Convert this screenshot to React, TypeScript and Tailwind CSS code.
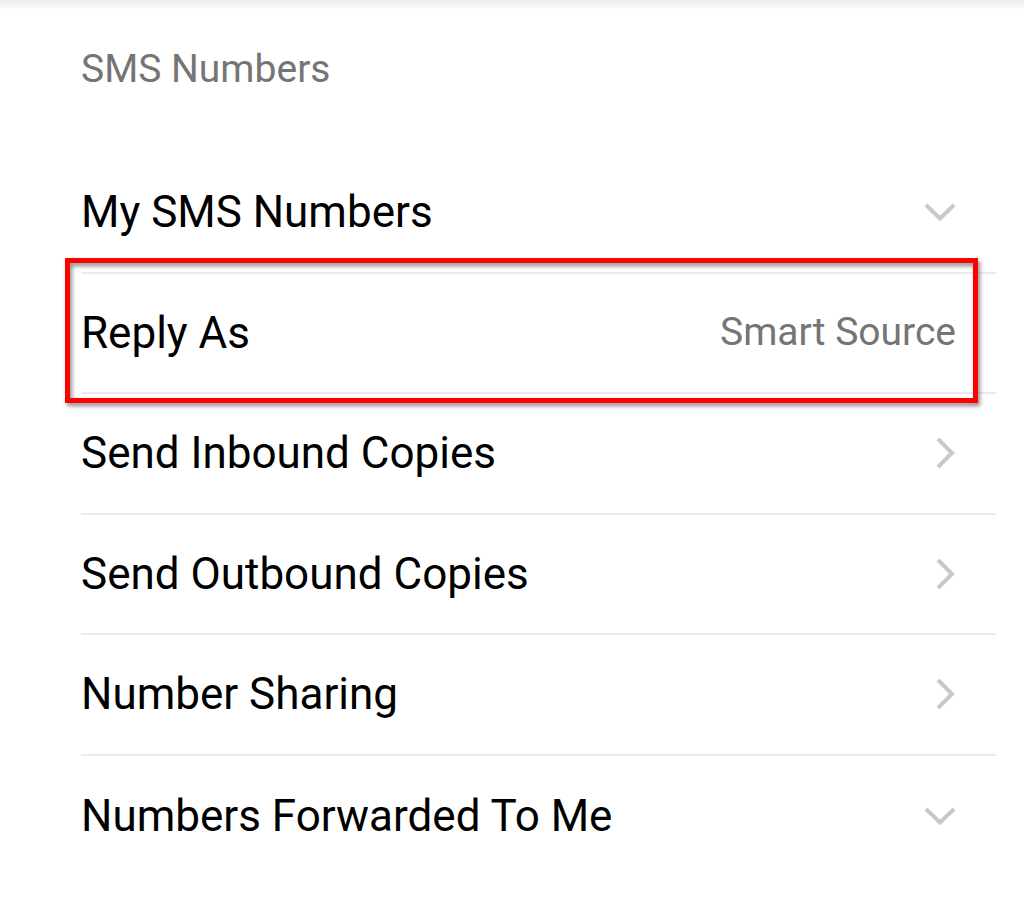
import { ReactNode } from "react";

type Row = {
  label: string;
  value?: string;
  icon?: "down" | "right";
  highlight?: boolean;
};

const rows: Row[] = [
  { label: "My SMS Numbers", icon: "down" },
  { label: "Reply As", value: "Smart Source", highlight: true },
  { label: "Send Inbound Copies", icon: "right" },
  { label: "Send Outbound Copies", icon: "right" },
  { label: "Number Sharing", icon: "right" },
  { label: "Numbers Forwarded To Me", icon: "down" },
];

function ChevronDown() {
  return (
    <svg width="32" height="18" viewBox="0 0 32 18" fill="none">
      <path d="M2 2 L16 15.5 L30 2" stroke="#c8c8c8" strokeWidth="4" />
    </svg>
  );
}

function ChevronRight() {
  return (
    <svg width="20" height="32" viewBox="0 0 20 32" fill="none" className="mr-px">
      <path d="M3 2 L17 16 L3 30" stroke="#c8c8c8" strokeWidth="4" />
    </svg>
  );
}

function SettingRow({ row, last }: { row: Row; last: boolean }) {
  let right: ReactNode = null;
  if (row.value) {
    right = <span className="text-[39px] leading-none text-[#757575]">{row.value}</span>;
  } else if (row.icon === "down") {
    right = <ChevronDown />;
  } else if (row.icon === "right") {
    right = <ChevronRight />;
  }

  return (
    <div
      className={`relative flex h-[120.5px] items-center justify-between pr-[40px] ${
        last ? "" : "border-b-2 border-[#ebebeb]"
      }`}
    >
      <span className="text-[44px] leading-none text-black">{row.label}</span>
      {right}
      {row.highlight && (
        <div className="pointer-events-none absolute -left-[16px] right-[18px] -top-[16px] -bottom-[11px] border-[5px] border-[#ff0000] [filter:drop-shadow(2px_3px_2px_rgba(0,0,0,0.45))]" />
      )}
    </div>
  );
}

export default function App() {
  return (
    <div className="min-h-screen bg-white font-['Roboto','Liberation_Sans',sans-serif]">
      <div className="h-[10px] bg-linear-to-b from-[#ececec] to-white" />

      <div className="pl-[81px] pr-[28px]">
        <h2 className="mt-[40px] mb-[64px] text-[39px] leading-none font-normal text-[#757575]">
          SMS Numbers
        </h2>

        <div>
          {rows.map((row, idx) => (
            <SettingRow key={row.label} row={row} last={idx === rows.length - 1} />
          ))}
        </div>
      </div>
    </div>
  );
}
